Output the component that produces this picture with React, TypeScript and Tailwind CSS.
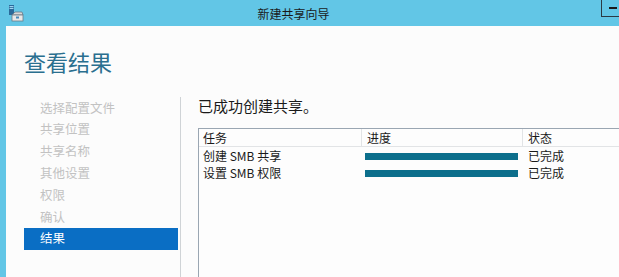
import React from "react";

const font = { fontFamily: '"Noto Sans CJK SC", "Noto Sans", sans-serif' };

function WizardIcon() {
  return (
    <svg width="16" height="20" viewBox="0 0 16 20">
      <rect x="1" y="1" width="5" height="10" fill="#2a6a9a" />
      <rect x="1.5" y="2" width="4" height="1.2" fill="#9fd4f0" />
      <rect x="1.5" y="4" width="4" height="1" fill="#9fd4f0" />
      <path d="M4 11 L7 8 L14 8 L15 11 Z" fill="#d8d8d8" stroke="#6a7a88" strokeWidth="0.8" />
      <rect x="4" y="11" width="11" height="6" fill="#e8e8e8" stroke="#6a7a88" strokeWidth="0.8" />
      <rect x="8" y="12.5" width="3" height="2" fill="#4a8ab8" />
    </svg>
  );
}

const navItems = ["选择配置文件", "共享位置", "共享名称", "其他设置", "权限", "确认"];

export default function App() {
  return (
    <div className="w-[619px] h-[277px] bg-[#62c6e6] flex flex-col overflow-hidden" style={font}>
      <div className="h-[26px] flex items-center">
        <div className="w-[26px] pl-[8px] pt-[2px] flex items-center">
          <WizardIcon />
        </div>
        <div className="flex-1 text-center pr-[40px] text-[12px] text-[#1a1a1a] leading-none pt-[1px]">新建共享向导</div>
        <div className="self-start w-[18px] h-[17px] border-l border-b border-[#2b3a44] flex items-center justify-center">
          <div className="w-[8px] h-[2px] bg-[#1a1a1a] ml-[4px]" />
        </div>
      </div>
      <div className="flex-1 ml-[6px] bg-[#fcfcfc] flex flex-col">
        <div className="h-[71px] pl-[18px] pt-[24px]">
          <div className="text-[22px] leading-none text-[#2a6f8f]">查看结果</div>
        </div>
        <div className="flex-1 flex">
          <div className="w-[175px] border-r border-[#cfd3d6] pl-[18px] pr-[2px] flex flex-col">
            {navItems.map((t) => (
              <div key={t} className="h-[21.8px] pl-[16px] flex items-center text-[12.5px] text-[#c2c2c2]">
                {t}
              </div>
            ))}
            <div className="h-[21.8px] pl-[16px] flex items-center text-[12.5px] text-white bg-[#0a6ec4]">
              结果
            </div>
          </div>
          <div className="flex-1 pl-[17px] flex flex-col">
            <div className="text-[15px] leading-none text-[#1a1a1a] pt-[1px]">已成功创建共享。</div>
            <div className="mt-[15px] flex-1 border-t border-l border-[#9aa6b2] bg-[#fdfdfd]">
              <div className="h-[18px] grid grid-cols-[163px_161px_1fr] border-b border-[#e2e4e6] text-[12px] text-[#1a1a1a]">
                <div className="pl-[4px] flex items-center border-r border-[#e2e4e6]">任务</div>
                <div className="pl-[5px] flex items-center border-r border-[#e2e4e6]">进度</div>
                <div className="pl-[5px] flex items-center">状态</div>
              </div>
              {["创建 SMB 共享", "设置 SMB 权限"].map((t) => (
                <div key={t} className="h-[17px] grid grid-cols-[163px_161px_1fr] text-[12px] text-[#1a1a1a]">
                  <div className="pl-[4px] flex items-center">{t}</div>
                  <div className="pl-[3px] pr-[5px] flex items-center">
                    <div className="h-[7px] w-full bg-[#0d6f8c]" />
                  </div>
                  <div className="pl-[5px] flex items-center">已完成</div>
                </div>
              ))}
            </div>
          </div>
        </div>
      </div>
    </div>
  );
}
